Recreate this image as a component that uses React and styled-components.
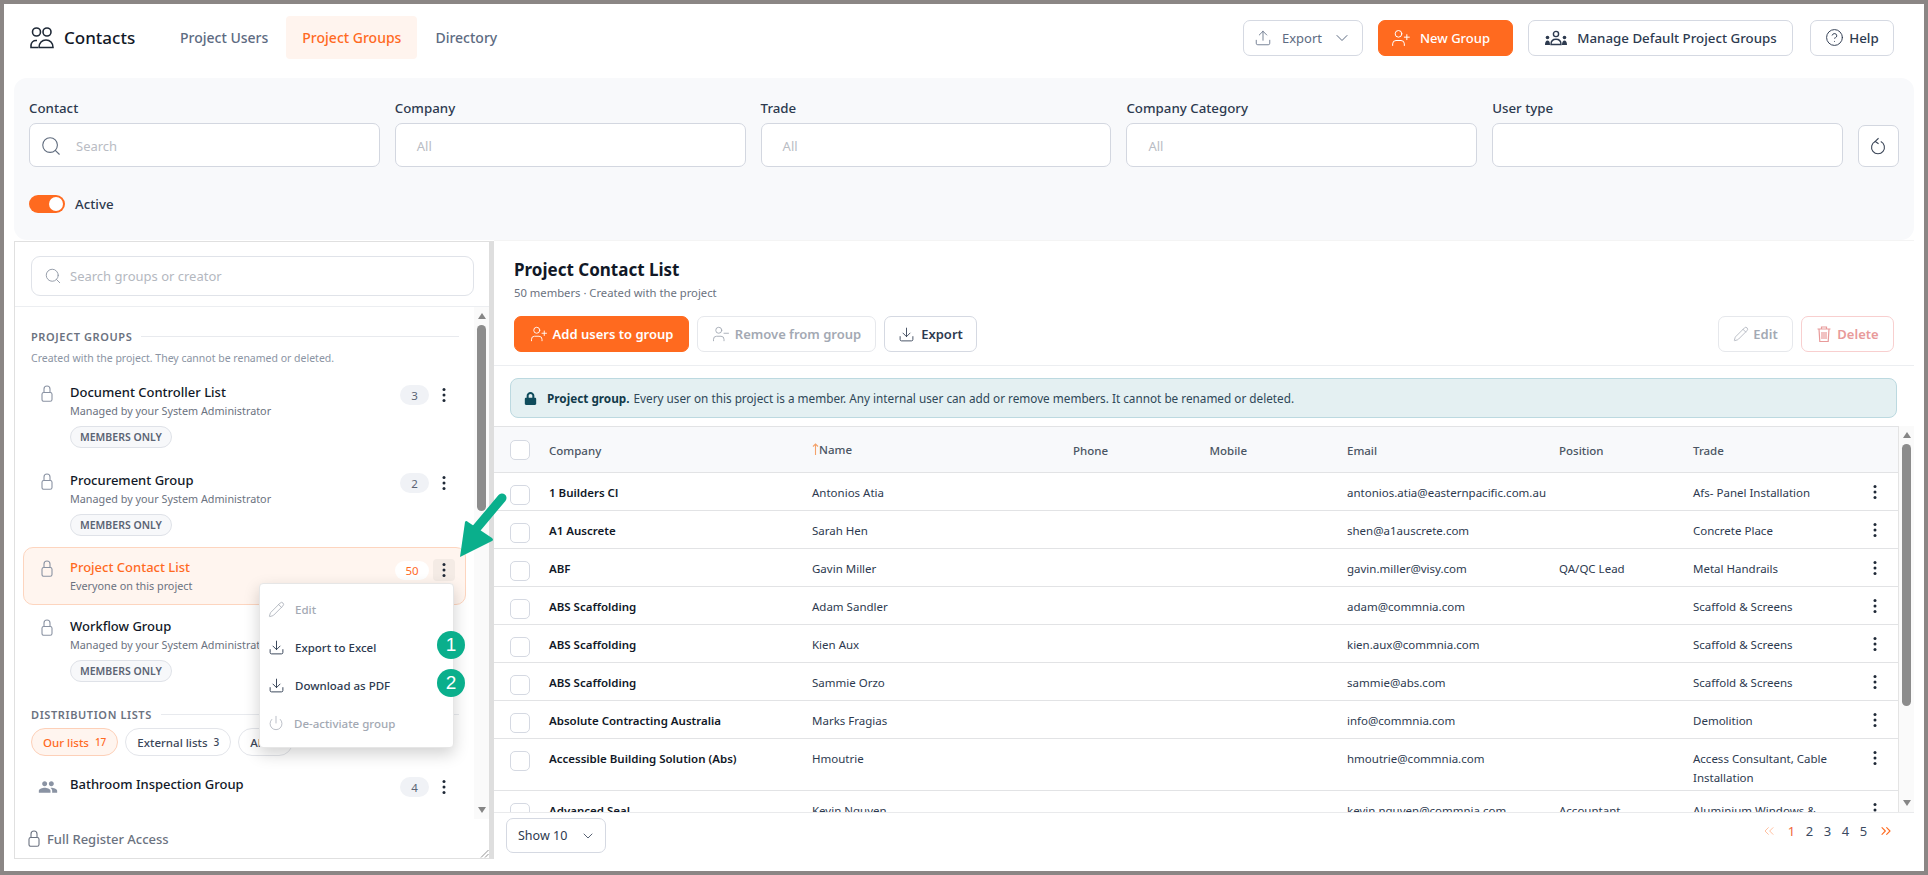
import React from "react";
import styled, { createGlobalStyle } from "styled-components";
import {
  ChevronDown,
  ChevronsLeft,
  ChevronsRight,
  CircleHelp,
  Download,
  Pencil,
  Power,
  Search,
  Upload,
  UserMinus,
  UserPlus,
} from "lucide-react";
import { FaLock } from "react-icons/fa";
import { MdPeople } from "react-icons/md";

// ================= GLOBAL =================

const Global = createGlobalStyle`
  html, body {
    margin: 0;
    padding: 0;
    background: #fff;
  }
  * {
    box-sizing: border-box;
  }
  body {
    font-family: "Noto Sans", "Open Sans", sans-serif;
    color: #1f2937;
  }
`;

const ORANGE = "#ff6a1f";

// ================= STYLES =================

const Frame = styled.div`
  position: relative;
  width: 1928px;
  height: 875px;
  border: 4px solid #8b8685;
  background: #fff;
  overflow: hidden;
`;

const TopBar = styled.header`
  display: flex;
  align-items: center;
  height: 74px;
  padding: 0 30px 7px 25px;
`;

const Brand = styled.div`
  display: flex;
  align-items: center;
  gap: 9px;
  width: 135px;
  font-size: 17px;
  font-weight: 500;
  color: #111827;
`;

const Tabs = styled.nav`
  display: flex;
  align-items: center;
  gap: 2px;
  height: 43px;
`;

const Tab = styled.div`
  display: flex;
  align-items: center;
  height: 43px;
  padding: 0 16px;
  font-size: 14px;
  font-weight: 500;
  border-radius: 4px;
  color: ${(p) => (p.$active ? ORANGE : "#5d6b82")};
  background: ${(p) => (p.$active ? "#fff4ee" : "transparent")};
`;

const TopActions = styled.div`
  display: flex;
  align-items: center;
  gap: 15px;
  margin-left: auto;
`;

const Btn = styled.button`
  display: inline-flex;
  align-items: center;
  justify-content: center;
  gap: ${(p) => p.$gap || 7}px;
  width: ${(p) => p.$w}px;
  height: 36px;
  padding: 0 ${(p) => p.$pr || 0}px 0 0;
  margin-left: ${(p) => p.$ml || 0}px;
  border-radius: 7px;
  font-family: inherit;
  font-size: ${(p) => p.$fs || 13}px;
  font-weight: ${(p) => p.$weight || 500};
  color: ${(p) => p.$color || "#2d3a4f"};
  background: ${(p) => (p.$primary ? ORANGE : "#fff")};
  border: 1px solid ${(p) => (p.$primary ? ORANGE : p.$border || "#d5d9e2")};
`;

const Filters = styled.section`
  height: 162px;
  margin: 0 10px;
  padding: 21px 15px 0;
  background: #f8f9fb;
  border-radius: 13px;
`;

const FilterRow = styled.div`
  display: flex;
  align-items: flex-end;
  gap: 15px;
`;

const Field = styled.div`
  flex: 1;
`;

const FieldLabel = styled.div`
  height: 18px;
  margin-bottom: 6px;
  font-size: 13.3px;
  line-height: 18px;
  font-weight: 500;
  color: #2d3a4f;
`;

const FieldBox = styled.div`
  display: flex;
  align-items: center;
  gap: 14px;
  height: 44px;
  padding: 1px ${(p) => (p.$icon ? 10 : 21)}px 0;
  background: #fff;
  border: 1px solid #d3d7e0;
  border-radius: 7px;
  font-size: 13px;
  color: #b9bcc4;
  svg {
    color: #5f6b7d;
  }
`;

const ResetBtn = styled.button`
  display: flex;
  align-items: center;
  justify-content: center;
  width: 41px;
  height: 42px;
  padding: 0;
  background: #fff;
  border: 1px solid #d3d7e0;
  border-radius: 7px;
  color: #3b4658;
`;

const ToggleRow = styled.div`
  display: flex;
  align-items: center;
  gap: 10px;
  margin-top: 28px;
  font-size: 13.3px;
  font-weight: 500;
  color: #2d3a4f;
`;

const Toggle = styled.div`
  position: relative;
  width: 36px;
  height: 18px;
  border-radius: 9px;
  background: ${ORANGE};
  &::after {
    content: "";
    position: absolute;
    right: 2px;
    top: 2px;
    width: 14px;
    height: 14px;
    border-radius: 50%;
    background: #fff;
  }
`;

const Main = styled.main`
  display: flex;
  height: 619px;
`;

const GroupsPanel = styled.aside`
  position: relative;
  display: flex;
  flex-direction: column;
  flex: none;
  width: 480px;
  margin: 1px 0 0 10px;
  border-top: 1px solid #e0e0e0;
  border-left: 1px solid #e0e0e0;
  border-bottom: 1px solid #e0e0e0;
  border-right: 5px solid #dedede;
`;

const GroupSearchWrap = styled.div`
  padding: 14px 15px 10px 16px;
  border-bottom: 1px solid #eceef1;
`;

const GroupSearch = styled.div`
  display: flex;
  align-items: center;
  gap: 8px;
  height: 40px;
  padding: 0 12px;
  border: 1px solid #e0e3e9;
  border-radius: 9px;
  font-size: 13px;
  color: #b4b8bf;
  svg {
    color: #8d95a3;
  }
`;

const GroupsBody = styled.div`
  display: flex;
  height: 512px;
`;

const GroupsList = styled.div`
  flex: 1;
  min-width: 0;
`;

const SectionHead = styled.div`
  display: flex;
  align-items: center;
  gap: 9px;
  height: 14px;
  margin: ${(p) => p.$top}px 15px 0 16px;
  font-size: 11px;
  font-weight: 600;
  letter-spacing: 0.6px;
  color: #6b7280;
  white-space: nowrap;
  &::after {
    content: "";
    flex: 1;
    height: 1px;
    background: #e8eaee;
  }
`;

const SectionNote = styled.div`
  margin: 8px 0 0 16px;
  font-size: 10.5px;
  line-height: 14px;
  color: #8b94a3;
`;

const Group = styled.div`
  position: relative;
  display: grid;
  grid-template-columns: 29px 1fr auto 26px;
  margin: ${(p) => p.$top || 0}px 8px ${(p) => (p.$selected ? 1 : 2)}px 8px;
  padding: 10px 10px ${(p) => (p.$selected ? 10 : 9)}px 17px;
  border: 1px solid ${(p) => (p.$selected ? "#fdd5bf" : "transparent")};
  border-radius: 10px;
  background: ${(p) => (p.$selected ? "#fff5ef" : "transparent")};
`;

const GroupIcon = styled.div`
  padding-top: 2px;
  margin-left: ${(p) => p.$ml || 0}px;
  color: #8a93a3;
`;

const GroupTitle = styled.div`
  font-size: 13px;
  line-height: 18px;
  font-weight: 500;
  color: ${(p) => (p.$selected ? ORANGE : "#111827")};
`;

const GroupSub = styled.div`
  margin-top: 1px;
  font-size: 10.8px;
  line-height: 17px;
  color: #6b7280;
  white-space: nowrap;
`;

const MemberChip = styled.span`
  display: inline-flex;
  align-items: center;
  height: 22px;
  margin-top: 7px;
  padding: 0 9px;
  border: 1px solid #dfe2e8;
  border-radius: 12px;
  background: #f7f8fa;
  font-size: 10.5px;
  font-weight: 600;
  color: #5b6474;
`;

const CountBadge = styled.span`
  display: flex;
  align-items: center;
  justify-content: center;
  width: ${(p) => (p.$selected ? 34 : 29)}px;
  height: ${(p) => (p.$selected ? 19 : 20)}px;
  margin-top: ${(p) => (p.$selected ? 3 : 2)}px;
  border-radius: 10px;
  font-size: 11.5px;
  color: ${(p) => (p.$selected ? ORANGE : "#5b6474")};
  background: ${(p) => (p.$selected ? "#fff" : "#f0f2f6")};
`;

const DotsBtn = styled.div`
  display: flex;
  align-items: center;
  justify-content: center;
  width: 22px;
  height: 22px;
  margin: 1px 0 0 4px;
  border-radius: 4px;
  color: #1f2937;
  background: ${(p) => (p.$open ? "#f4ebe5" : "transparent")};
`;

const ListChips = styled.div`
  display: flex;
  gap: 7px;
  margin: 7px 0 8px 16px;
`;

const ListChip = styled.span`
  display: inline-flex;
  align-items: center;
  gap: 6px;
  height: 28px;
  padding: 0 11px;
  border-radius: 14px;
  font-size: 11.5px;
  font-weight: 500;
  border: 1px solid ${(p) => (p.$active ? "#fdd0b8" : "#e3e5ea")};
  background: ${(p) => (p.$active ? "#fff5ef" : "#fff")};
  color: ${(p) => (p.$active ? ORANGE : "#3b4658")};
  small {
    font-size: 10px;
  }
`;

const Track = styled.div`
  display: flex;
  flex-direction: column;
  flex: none;
  width: ${(p) => p.$w}px;
  background: #fafafa;
  border-left: ${(p) => (p.$line ? "1px solid #e4e4e4" : "none")};
`;

const TrackArrow = styled.div`
  display: flex;
  align-items: center;
  justify-content: center;
  height: 18px;
  flex: none;
  &::before {
    content: "";
    border-left: 4.5px solid transparent;
    border-right: 4.5px solid transparent;
    border-${(p) => (p.$down ? "top" : "bottom")}: 6px solid #868686;
  }
`;

const TrackThumb = styled.div`
  flex: none;
  width: 9px;
  margin-left: 3px;
  margin-bottom: auto;
  height: ${(p) => p.$h}px;
  border-radius: 5px;
  background: #8c8c8c;
`;

const GroupsFoot = styled.div`
  display: flex;
  align-items: center;
  gap: 7px;
  flex: 1;
  padding-left: 13px;
  font-size: 13px;
  font-weight: 500;
  color: #6b7280;
`;

const ResizeGrip = styled.svg`
  position: absolute;
  right: 0;
  bottom: 0;
`;

const Menu = styled.div`
  position: absolute;
  top: 35px;
  right: 11px;
  z-index: 5;
  width: 195px;
  padding: 6px 0 5px;
  background: #fff;
  border: 1px solid #e6e6e6;
  border-radius: 4px;
  box-shadow: 0 6px 16px rgba(0, 0, 0, 0.18);
`;

const MenuItem = styled.div`
  position: relative;
  display: flex;
  align-items: center;
  gap: 10px;
  height: 38px;
  padding-left: 8px;
  font-size: 11.5px;
  font-weight: 500;
  color: ${(p) => (p.$off ? "#a3a9b3" : "#2d3a4f")};
`;

const Callout = styled.span`
  position: absolute;
  right: -12px;
  top: 3px;
  display: flex;
  align-items: center;
  justify-content: center;
  width: 28px;
  height: 28px;
  border-radius: 50%;
  background: #0aaf8c;
  color: #fff;
  font-family: "Liberation Sans", sans-serif;
  font-size: 19px;
`;

const ContactsPane = styled.section`
  display: flex;
  flex-direction: column;
  width: 1420px;
  border-top: 1px solid #f4f4f4;
`;

const PaneHead = styled.div`
  padding: 17px 20px 13px 20px;
  border-bottom: 1px solid #eceef1;
`;

const PaneTitle = styled.h2`
  margin: 0;
  font-size: 17px;
  line-height: 24px;
  font-weight: 700;
  color: #111827;
`;

const PaneSub = styled.div`
  margin-top: 3px;
  font-size: 11.25px;
  line-height: 16px;
  color: #6b7280;
`;

const PaneActions = styled.div`
  display: flex;
  gap: 8px;
  margin-top: 15px;
`;

const Spacer = styled.div`
  flex: 1;
`;

const Banner = styled.div`
  display: flex;
  align-items: center;
  height: 40px;
  margin: 12px 17px 8px 16px;
  padding-left: 13px;
  background: #e4f0f2;
  border: 1px solid #bcd9e0;
  border-radius: 8px;
  font-size: 11.75px;
  color: #2f4858;
  svg {
    color: #0f4c5c;
    margin-right: 10px;
  }
  b {
    font-weight: 700;
    color: #123a4a;
    margin-right: 4px;
  }
`;

const TableWrap = styled.div`
  display: flex;
  flex: 1;
  min-height: 0;
  overflow: hidden;
`;

const Table = styled.div`
  flex: 1;
  min-width: 0;
  overflow: hidden;
`;

const Row = styled.div`
  display: grid;
  grid-template-columns: 39px 263px 261px 136.5px 137.5px 212px 134px 165px 34px;
  padding: 10px 0 3px 16px;
  min-height: 38px;
  border-bottom: 1px solid #e2e3e5;
  font-size: 11.5px;
  line-height: 19px;
  color: #2d3a4f;
`;

const HeadRow = styled(Row)`
  align-items: center;
  min-height: 47px;
  padding: 1px 0 0 16px;
  background: #f8f9fb;
  border-top: 1px solid #e2e3e5;
  font-weight: 500;
  color: #4b5563;
`;

const Check = styled.div`
  width: 20px;
  height: 20px;
  margin-top: ${(p) => p.$top || 0}px;
  background: #fff;
  border: 1px solid #d5d9e2;
  border-radius: 5px;
`;

const CompanyCell = styled.div`
  font-weight: 600;
  color: #111827;
`;

const TradeCell = styled.div`
  padding-right: 15px;
`;

const SortedHead = styled.div`
  display: flex;
  align-items: center;
  margin-top: -2px;
  svg {
    flex: none;
  }
`;

const RowDots = styled.div`
  display: flex;
  justify-content: center;
  padding-top: 1px;
  color: #1f2937;
`;

const PaneFoot = styled.div`
  display: flex;
  align-items: flex-start;
  justify-content: space-between;
  height: 47px;
  padding: 5px 20px 0 12px;
  border-top: 1px solid #e9eaec;
`;

const ShowSelect = styled.div`
  display: flex;
  align-items: center;
  justify-content: space-between;
  width: 100px;
  height: 35px;
  padding: 0 9px 0 11px;
  border: 1px solid #d5d9e2;
  border-radius: 7px;
  font-size: 12.5px;
  color: #2d3a4f;
`;

const Pager = styled.div`
  display: flex;
  align-items: center;
  gap: 5px;
  height: 26px;
  font-size: 13px;
  color: #3b4a62;
`;

const PagerNum = styled.span`
  width: 13px;
  text-align: center;
  color: ${(p) => (p.$active ? "#f0683a" : "#3b4a62")};
`;

const PagerArrow = styled.span`
  display: flex;
  color: ${ORANGE};
  opacity: ${(p) => (p.$faded ? 0.45 : 1)};
  margin: ${(p) => p.$m};
`;

const PointerArrow = styled.svg`
  position: absolute;
  left: 436px;
  top: 486px;
  z-index: 10;
`;

// ================= ICONS =================

const Dots = ({ size = 16 }) => (
  <svg width={size} height={size} viewBox="0 0 16 16" fill="currentColor">
    <circle cx="8" cy="2.6" r="1.5" />
    <circle cx="8" cy="8" r="1.5" />
    <circle cx="8" cy="13.4" r="1.5" />
  </svg>
);

const ThinLock = () => (
  <svg width="12" height="17" viewBox="0 0 12 17" fill="none" stroke="currentColor" strokeWidth="1.1">
    <rect x="1" y="7.5" width="10" height="8.8" rx="1.8" />
    <path d="M3 7.5V4a3 3 0 0 1 6 0v3.5" />
  </svg>
);

const ContactsIcon = () => (
  <svg width="26" height="24" viewBox="0 0 26 24" fill="none" stroke="#1f2937" strokeWidth="1.6">
    <circle cx="7.5" cy="6" r="4" />
    <circle cx="18" cy="6" r="4" />
    <path d="M9 21.5H2v-2.5a5 5 0 0 1 5-4.5h1" />
    <path d="M10 21.5c0-4.5 3-7.5 7-7.5s7 3 7 7.5z" />
  </svg>
);

const TeamIcon = () => (
  <svg width="24" height="16" viewBox="0 0 24 16" fill="#2d3a4f">
    <circle cx="12" cy="4" r="2.6" fill="none" stroke="#2d3a4f" strokeWidth="1.4" />
    <path d="M7 14.5c0-3.5 2-5.2 5-5.2s5 1.7 5 5.2z" fill="none" stroke="#2d3a4f" strokeWidth="1.4" />
    <circle cx="3.5" cy="7.5" r="1.8" />
    <circle cx="20.5" cy="7.5" r="1.8" />
    <path d="M1 15c0-3 1-4.5 2.5-4.5S6 11.5 6 15zM18 15c0-3 1-4.5 2.5-4.5S23 12 23 15z" />
  </svg>
);

const ResetIcon = () => (
  <svg width="18" height="20" viewBox="0 0 16 18" fill="none" stroke="currentColor" strokeWidth="1">
    <path d="M5.5 5a5.8 5.8 0 1 0 5 0" />
    <path d="M8.5 2L5.5 4.8l3 2.2" />
  </svg>
);

const TrashIcon = () => (
  <svg width="16" height="18" viewBox="0 0 16 18" fill="none" stroke="currentColor" strokeWidth="1.2">
    <path d="M1.5 4h13M5.5 4V2h5v2M3 4l.8 12.5h8.4L13 4M6 7v7M8 7v7M10 7v7" />
  </svg>
);

const SortIcon = () => (
  <svg width="7" height="12" viewBox="0 0 7 12" fill="none" stroke="#f4a26a" strokeWidth="1.1">
    <path d="M3.5 12V1M1 3.5L3.5 1L6 3.5" />
  </svg>
);

const ThinChevron = ({ size = 16 }) => <ChevronDown size={size} strokeWidth={1.2} />;

// ================= DATA =================

const rows = [
  { company: "1 Builders Cl", name: "Antonios Atia", email: "antonios.atia@easternpacific.com.au", trade: "Afs- Panel Installation" },
  { company: "A1 Auscrete", name: "Sarah Hen", email: "shen@a1auscrete.com", trade: "Concrete Place" },
  { company: "ABF", name: "Gavin Miller", email: "gavin.miller@visy.com", position: "QA/QC Lead", trade: "Metal Handrails" },
  { company: "ABS Scaffolding", name: "Adam Sandler", email: "adam@commnia.com", trade: "Scaffold & Screens" },
  { company: "ABS Scaffolding", name: "Kien Aux", email: "kien.aux@commnia.com", trade: "Scaffold & Screens" },
  { company: "ABS Scaffolding", name: "Sammie Orzo", email: "sammie@abs.com", trade: "Scaffold & Screens" },
  { company: "Absolute Contracting Australia", name: "Marks Fragias", email: "info@commnia.com", trade: "Demolition" },
  { company: "Accessible Building Solution (Abs)", name: "Hmoutrie", email: "hmoutrie@commnia.com", trade: "Access Consultant, Cable Installation" },
  { company: "Advanced Seal", name: "Kevin Nguyen", email: "kevin.nguyen@commnia.com", position: "Accountant", trade: "Aluminium Windows & Doors" },
];

const filters = ["Company", "Trade", "Company Category"];

const ADMIN = "Managed by your System Administrator";

// ================= COMPONENT =================

export default function App() {
  return (
    <Frame>
      <Global />

      <TopBar>
        <Brand>
          <ContactsIcon />
          Contacts
        </Brand>
        <Tabs>
          <Tab>Project Users</Tab>
          <Tab $active>Project Groups</Tab>
          <Tab>Directory</Tab>
        </Tabs>
        <TopActions>
          <Btn $w={120} $gap={10} $color="#5d6b82" $weight={400}>
            <Upload size={18} strokeWidth={1.1} />
            Export
            <ThinChevron size={20} />
          </Btn>
          <Btn $primary $w={135} $gap={9} $pr={10} $color="#fff">
            <UserPlus size={20} strokeWidth={1.2} />
            New Group
          </Btn>
          <Btn $w={265} $gap={9} $fs={13.3}>
            <TeamIcon />
            Manage Default Project Groups
          </Btn>
          <Btn $w={84} $gap={5} $ml={2} $fs={13.3}>
            <CircleHelp size={19} strokeWidth={1.2} />
            Help
          </Btn>
        </TopActions>
      </TopBar>

      <Filters>
        <FilterRow>
          <Field>
            <FieldLabel>Contact</FieldLabel>
            <FieldBox $icon>
              <Search size={22} strokeWidth={1.2} />
              Search
            </FieldBox>
          </Field>
          {filters.map((f) => (
            <Field key={f}>
              <FieldLabel>{f}</FieldLabel>
              <FieldBox>All</FieldBox>
            </Field>
          ))}
          <Field>
            <FieldLabel>User type</FieldLabel>
            <FieldBox />
          </Field>
          <ResetBtn>
            <ResetIcon />
          </ResetBtn>
        </FilterRow>
        <ToggleRow>
          <Toggle />
          Active
        </ToggleRow>
      </Filters>

      <Main>
        <GroupsPanel>
          <GroupSearchWrap>
            <GroupSearch>
              <Search size={18} strokeWidth={1.2} />
              Search groups or creator
            </GroupSearch>
          </GroupSearchWrap>

          <GroupsBody>
            <GroupsList>
              <SectionHead $top={22}>PROJECT GROUPS</SectionHead>
              <SectionNote>Created with the project. They cannot be renamed or deleted.</SectionNote>

              <Group $top={7}>
                <GroupIcon><ThinLock /></GroupIcon>
                <div>
                  <GroupTitle>Document Controller List</GroupTitle>
                  <GroupSub>{ADMIN}</GroupSub>
                  <MemberChip>MEMBERS ONLY</MemberChip>
                </div>
                <CountBadge>3</CountBadge>
                <DotsBtn><Dots /></DotsBtn>
              </Group>

              <Group>
                <GroupIcon><ThinLock /></GroupIcon>
                <div>
                  <GroupTitle>Procurement Group</GroupTitle>
                  <GroupSub>{ADMIN}</GroupSub>
                  <MemberChip>MEMBERS ONLY</MemberChip>
                </div>
                <CountBadge>2</CountBadge>
                <DotsBtn><Dots /></DotsBtn>
              </Group>

              <Group $selected $top={-1}>
                <GroupIcon><ThinLock /></GroupIcon>
                <div>
                  <GroupTitle $selected>Project Contact List</GroupTitle>
                  <GroupSub>Everyone on this project</GroupSub>
                </div>
                <CountBadge $selected>50</CountBadge>
                <DotsBtn $open><Dots /></DotsBtn>
                <Menu>
                  <MenuItem $off>
                    <Pencil size={17} strokeWidth={1.1} />
                    Edit
                  </MenuItem>
                  <MenuItem>
                    <Download size={17} strokeWidth={1.3} />
                    Export to Excel
                    <Callout>1</Callout>
                  </MenuItem>
                  <MenuItem>
                    <Download size={17} strokeWidth={1.3} />
                    Download as PDF
                    <Callout>2</Callout>
                  </MenuItem>
                  <MenuItem $off>
                    <Power size={16} strokeWidth={1.1} />
                    De-activiate group
                  </MenuItem>
                </Menu>
              </Group>

              <Group>
                <GroupIcon><ThinLock /></GroupIcon>
                <div>
                  <GroupTitle>Workflow Group</GroupTitle>
                  <GroupSub>{ADMIN}</GroupSub>
                  <MemberChip>MEMBERS ONLY</MemberChip>
                </div>
              </Group>

              <SectionHead $top={15}>DISTRIBUTION LISTS</SectionHead>
              <ListChips>
                <ListChip $active>Our lists <small>17</small></ListChip>
                <ListChip>External lists <small>3</small></ListChip>
                <ListChip>All <small>20</small></ListChip>
              </ListChips>

              <Group>
                <GroupIcon $ml={-3}><MdPeople size={20} /></GroupIcon>
                <GroupTitle>Bathroom Inspection Group</GroupTitle>
                <CountBadge>4</CountBadge>
                <DotsBtn><Dots /></DotsBtn>
              </Group>
            </GroupsList>

            <Track $w={15}>
              <TrackArrow />
              <TrackThumb $h={186} />
              <TrackArrow $down />
            </Track>
          </GroupsBody>

          <GroupsFoot>
            <ThinLock />
            Full Register Access
          </GroupsFoot>
          <ResizeGrip width="9" height="9" viewBox="0 0 9 9" stroke="#777" strokeWidth="0.8">
            <path d="M8.5 1L1 8.5M8.5 5L5 8.5" />
          </ResizeGrip>
        </GroupsPanel>

        <ContactsPane>
          <PaneHead>
            <PaneTitle>Project Contact List</PaneTitle>
            <PaneSub>50 members · Created with the project</PaneSub>
            <PaneActions>
              <Btn $primary $w={175} $gap={5} $color="#fff" $weight={600}>
                <UserPlus size={18} strokeWidth={1.2} />
                Add users to group
              </Btn>
              <Btn $w={179} $gap={5} $color="#a3a9b3" $border="#e6e8ec" $weight={600}>
                <UserMinus size={18} strokeWidth={1.2} />
                Remove from group
              </Btn>
              <Btn $w={93} $gap={6} $weight={600}>
                <Download size={17} strokeWidth={1.2} />
                Export
              </Btn>
              <Spacer />
              <Btn $w={75} $gap={4} $color="#a3a9b3" $border="#e6e8ec" $weight={600}>
                <Pencil size={16} strokeWidth={1.1} />
                Edit
              </Btn>
              <Btn $w={93} $gap={5} $color="#e89a9a" $border="#f8cfcf" $weight={600}>
                <TrashIcon />
                Delete
              </Btn>
            </PaneActions>
          </PaneHead>

          <Banner>
            <FaLock size={13} />
            <b>Project group.</b>
            Every user on this project is a member. Any internal user can add or remove members. It cannot be renamed or deleted.
          </Banner>

          <TableWrap>
            <Table>
              <HeadRow>
                <Check />
                <div>Company</div>
                <SortedHead><SortIcon />Name</SortedHead>
                <div>Phone</div>
                <div>Mobile</div>
                <div>Email</div>
                <div>Position</div>
                <div>Trade</div>
              </HeadRow>
              {rows.map((r) => (
                <Row key={r.email}>
                  <Check $top={2} />
                  <CompanyCell>{r.company}</CompanyCell>
                  <div>{r.name}</div>
                  <div />
                  <div />
                  <div>{r.email}</div>
                  <div>{r.position}</div>
                  <TradeCell>{r.trade}</TradeCell>
                  <RowDots><Dots /></RowDots>
                </Row>
              ))}
            </Table>
            <Track $w={16} $line>
              <TrackArrow />
              <TrackThumb $h={262} />
              <TrackArrow $down />
            </Track>
          </TableWrap>

          <PaneFoot>
            <ShowSelect>
              Show 10
              <ThinChevron size={16} />
            </ShowSelect>
            <Pager>
              <PagerArrow $faded $m="0 3px 0 0"><ChevronsLeft size={16} strokeWidth={1.4} /></PagerArrow>
              <PagerNum $active>1</PagerNum>
              <PagerNum>2</PagerNum>
              <PagerNum>3</PagerNum>
              <PagerNum>4</PagerNum>
              <PagerNum>5</PagerNum>
              <PagerArrow $m="0 0 0 3px"><ChevronsRight size={16} strokeWidth={1.6} /></PagerArrow>
            </Pager>
          </PaneFoot>
        </ContactsPane>
      </Main>

      <PointerArrow width="70" height="76" viewBox="0 0 70 76" fill="#0aaf8c">
        <path d="M62 8L30 46" stroke="#0aaf8c" strokeWidth="9" strokeLinecap="round" />
        <path d="M20 67L25 32Q26 30 28 32L52 48Q54 50 52 51Z" />
      </PointerArrow>
    </Frame>
  );
}
